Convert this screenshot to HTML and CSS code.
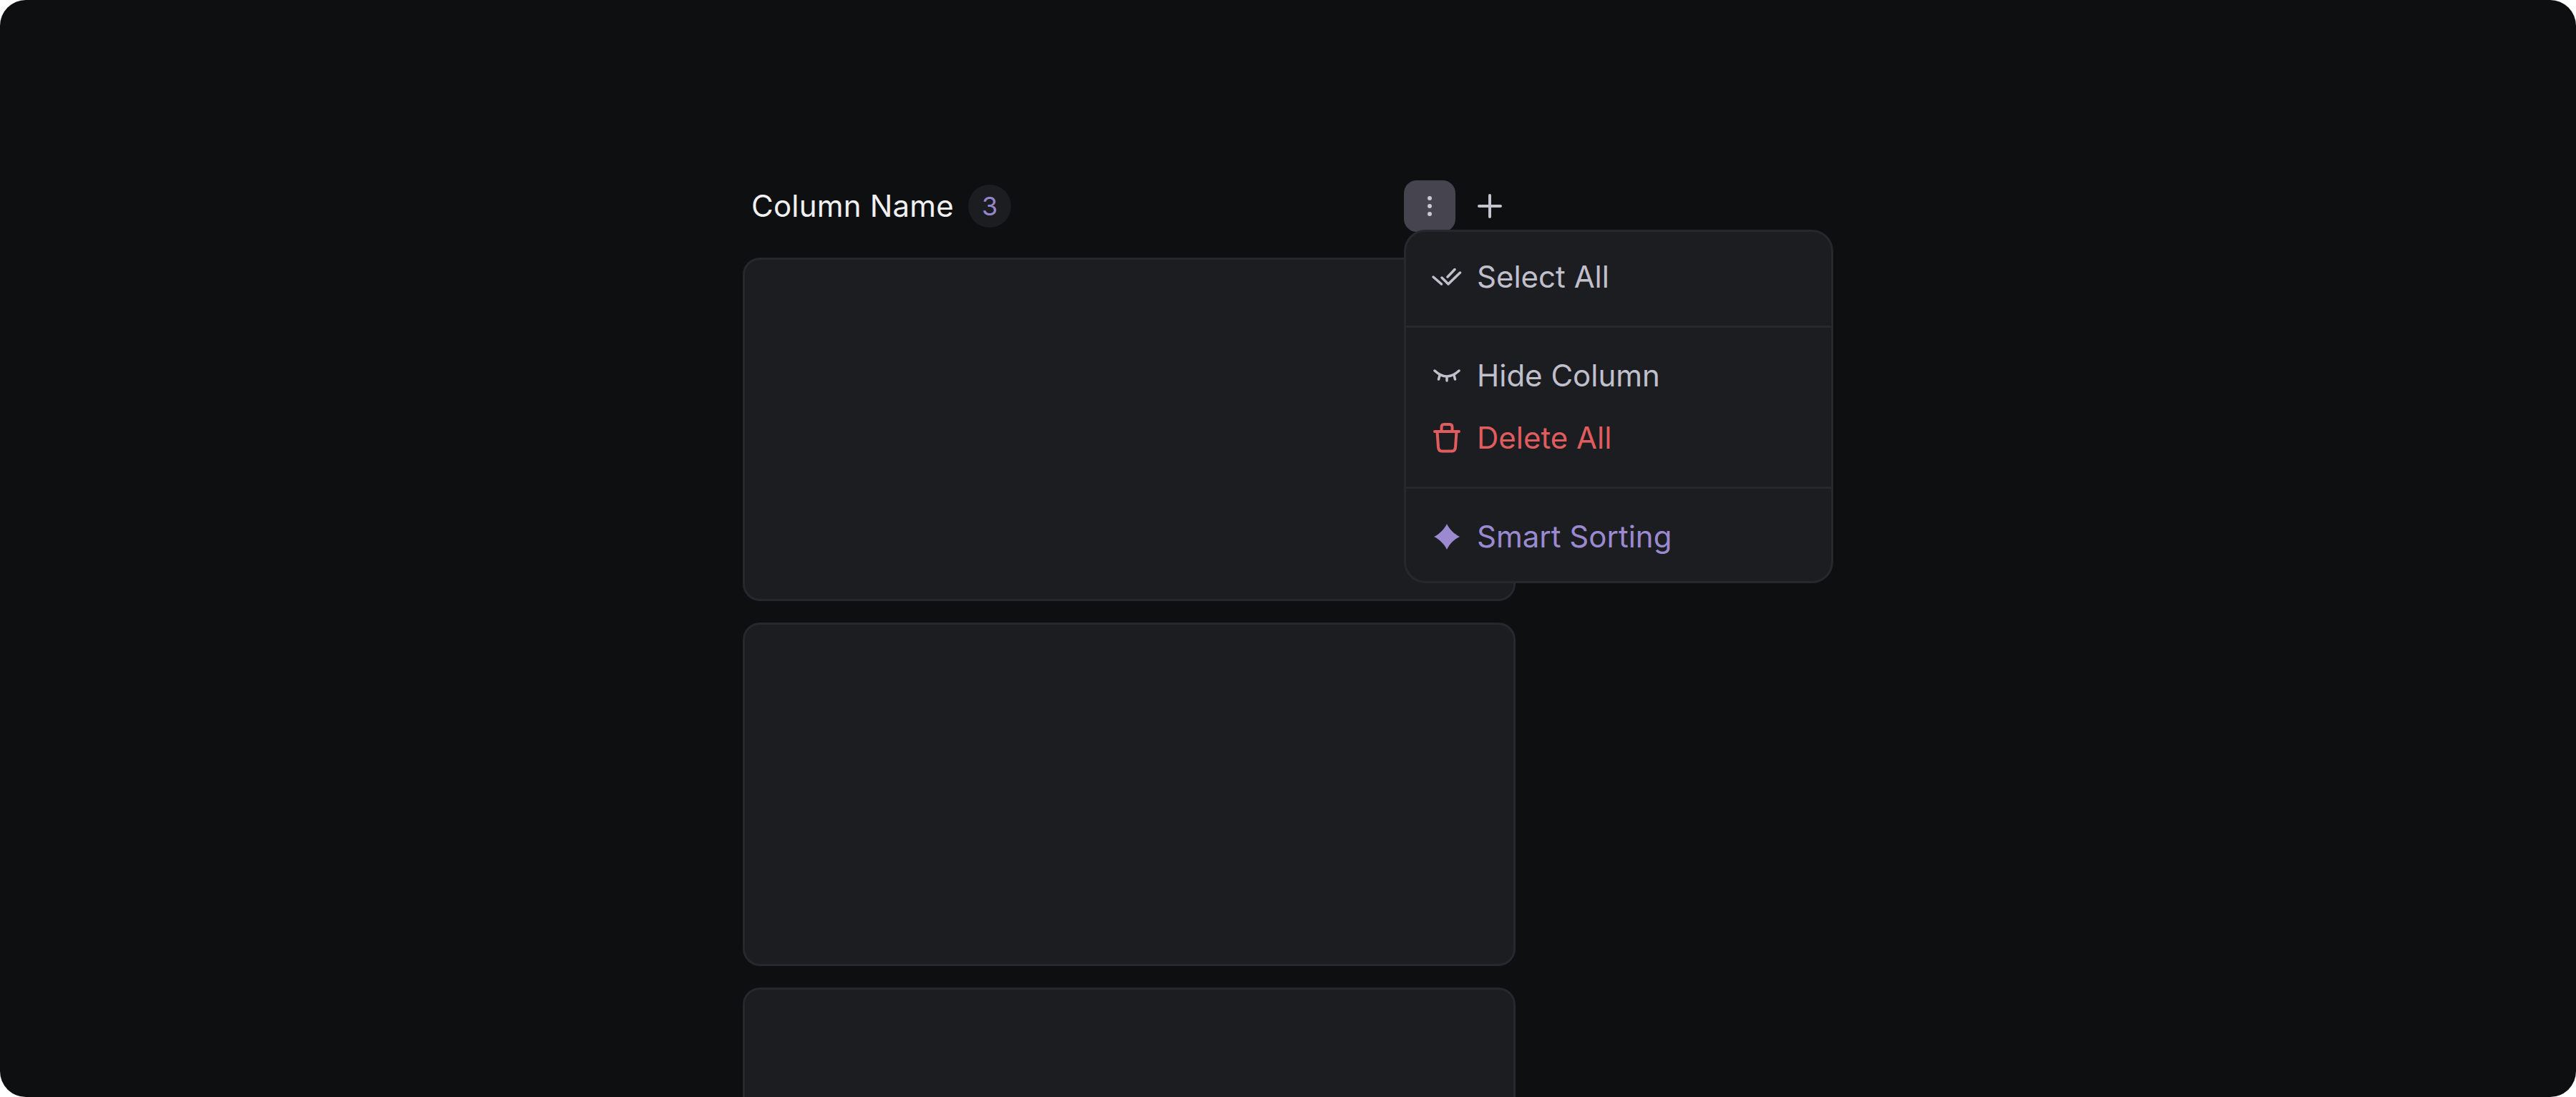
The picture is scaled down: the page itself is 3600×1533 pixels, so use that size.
FILE: index.html
```html
<!DOCTYPE html>
<html lang="en">
<head>
  <meta charset="UTF-8">
  <meta name="viewport" content="width=device-width, initial-scale=1.0">
  <title>Column Menu</title>
  <link rel="stylesheet" href="styles.css">
</head>
<body>
  <div class="screen">
    <div class="column">
      <div class="column-header">
        <div class="column-title">
          <span class="column-name">Column Name</span>
          <span class="count-badge">3</span>
        </div>
        <div class="column-actions">
          <button class="icon-button active" aria-label="More">
            <svg width="48" height="48" viewBox="0 0 48 48" fill="#c9c8d4">
              <circle cx="24" cy="13" r="3"/>
              <circle cx="24" cy="24" r="3"/>
              <circle cx="24" cy="35" r="3"/>
            </svg>
          </button>
          <button class="icon-button" aria-label="Add">
            <svg width="48" height="48" viewBox="0 0 48 48" fill="none" stroke="#c4c4cf" stroke-width="4" stroke-linecap="round">
              <path d="M24 9V39M9 24H39"/>
            </svg>
          </button>

          <div class="menu">
            <div class="menu-section">
              <div class="menu-item">
                <svg class="menu-icon" width="48" height="48" viewBox="0 0 48 48" fill="none" stroke="currentColor" stroke-width="3.5" stroke-linecap="round" stroke-linejoin="round">
                  <path d="M5 24L16.5 34"/>
                  <path d="M17 25L26 34L42.5 18"/>
                  <path d="M25 24L35 13.5"/>
                </svg>
                <span>Select All</span>
              </div>
            </div>
            <div class="menu-section">
              <div class="menu-item">
                <svg class="menu-icon" width="48" height="48" viewBox="0 0 48 48" fill="none" stroke="currentColor" stroke-width="3.5" stroke-linecap="round">
                  <path d="M7 17Q24 33 41 17"/>
                  <path d="M14 23.5L12.5 29M24 25.5V31M34 23.5L35.5 29"/>
                </svg>
                <span>Hide Column</span>
              </div>
              <div class="menu-item danger">
                <svg class="menu-icon" width="48" height="48" viewBox="0 0 48 48" fill="none" stroke="currentColor" stroke-width="4" stroke-linecap="round" stroke-linejoin="round">
                  <path d="M7 15H41"/>
                  <path d="M10.5 15L12 37Q12.5 42.5 17 42.5H31Q35.5 42.5 36 37L37.5 15"/>
                  <path d="M16.5 15V9Q16.5 5 20 5H28Q31.5 5 31.5 9V15"/>
                </svg>
                <span>Delete All</span>
              </div>
            </div>
            <div class="menu-section">
              <div class="menu-item smart">
                <svg class="menu-icon" width="48" height="48" viewBox="0 0 48 48" fill="currentColor">
                  <path d="M24 6C27 13 35 21 42 24C35 27 27 35 24 42C21 35 13 27 6 24C13 21 21 13 24 6Z"/>
                </svg>
                <span>Smart Sorting</span>
              </div>
            </div>
          </div>
        </div>
      </div>

      <div class="cards">
        <div class="card"></div>
        <div class="card"></div>
        <div class="card"></div>
      </div>
    </div>
  </div>
</body>
</html>
```

FILE: styles.css
```css
html, body {
  margin: 0;
  height: 100%;
  overflow: hidden;
  background-color: #fff;
}
.screen {
  height: 1533px;
  box-sizing: border-box;
  padding: 252px 0 0 1038px;
  background-color: #0e0f11;
  border-radius: 36px;
  overflow: hidden;
  font-family: Inter, "Liberation Sans", sans-serif;
  font-size: 42px;
  line-height: 60px;
}
.column {
  width: 1080px;
}
.column-header {
  display: flex;
  justify-content: space-between;
  align-items: center;
  height: 72px;
  margin-bottom: 36px;
}
.column-title {
  display: flex;
  align-items: center;
  gap: 20px;
  padding-left: 12px;
}
.column-name {
  color: #f0f0f3;
  letter-spacing: 0.2px;
}
.count-badge {
  width: 60px;
  height: 60px;
  border-radius: 50%;
  background-color: #1c1d21;
  color: #9585cc;
  font-size: 36px;
  text-align: center;
}
.column-actions {
  position: relative;
  display: flex;
  gap: 12px;
}
.icon-button {
  display: flex;
  align-items: center;
  justify-content: center;
  width: 72px;
  height: 72px;
  padding: 0;
  border: none;
  border-radius: 18px;
  background: none;
}
.icon-button.active {
  background-color: #45444f;
}
.menu {
  position: absolute;
  top: 69px;
  left: 0;
  width: 600px;
  box-sizing: border-box;
  background-color: #1c1d21;
  border: 3px solid #27282e;
  border-radius: 30px;
}
.menu-section {
  display: flex;
  flex-direction: column;
  gap: 27px;
  padding: 37px 33px 38px;
  border-bottom: 3px solid #27282e;
}
.menu-section:first-child {
  padding-top: 33px;
}
.menu-section:last-child {
  border-bottom: none;
  padding-bottom: 32px;
}
.menu-item {
  display: flex;
  align-items: center;
  gap: 18px;
  color: #c0bfcc;
}
.menu-item.danger {
  color: #e05c5f;
}
.menu-item.smart {
  color: #9b8ad0;
}
.menu-icon {
  flex-shrink: 0;
}
.cards {
  display: flex;
  flex-direction: column;
  gap: 30px;
}
.card {
  flex-shrink: 0;
  height: 480px;
  box-sizing: border-box;
  background-color: #1c1d21;
  border: 3px solid #27282e;
  border-radius: 24px;
}
```
